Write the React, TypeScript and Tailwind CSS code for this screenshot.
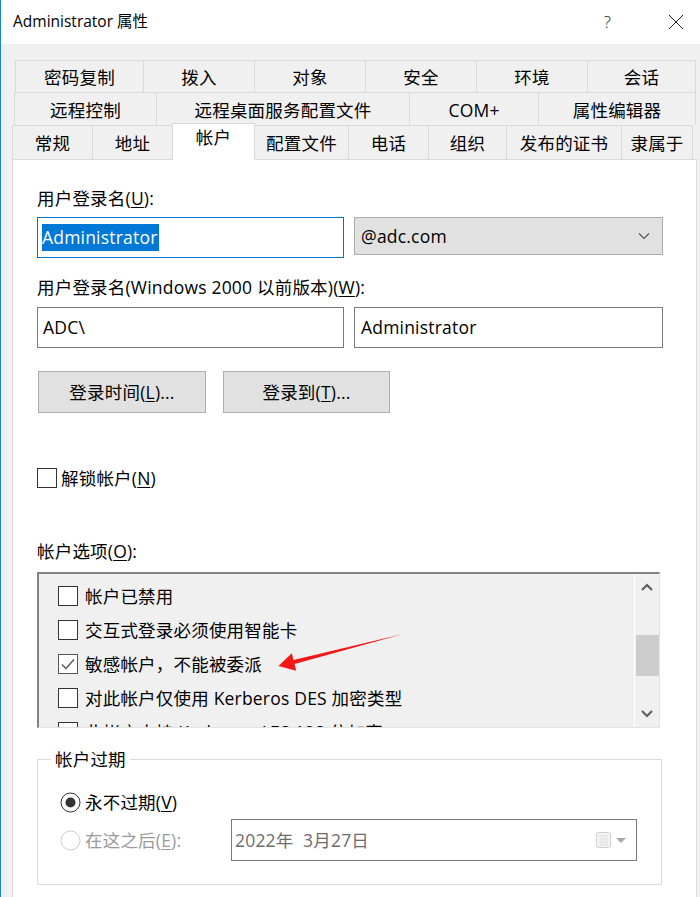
import React from 'react';

const FONT = "font-['Open_Sans','Noto_Sans_CJK_SC',sans-serif]";

type TabDef = { label: string; w: string; active?: boolean };

const row1: TabDef[] = [
  { label: '密码复制', w: 'w-[129px]' },
  { label: '拨入', w: 'w-[111px]' },
  { label: '对象', w: 'w-[111px]' },
  { label: '安全', w: 'w-[111px]' },
  { label: '环境', w: 'w-[111px]' },
  { label: '会话', w: 'w-[108px]' },
];

const row2: TabDef[] = [
  { label: '远程控制', w: 'w-[143px]' },
  { label: '远程桌面服务配置文件', w: 'w-[253px]' },
  { label: 'COM+', w: 'w-[129px]' },
  { label: '属性编辑器', w: 'w-[157px]' },
];

const row3: TabDef[] = [
  { label: '常规', w: 'w-[81px]' },
  { label: '地址', w: 'w-[79px]' },
  { label: '帐户', w: 'w-[83px]', active: true },
  { label: '配置文件', w: 'w-[94px]' },
  { label: '电话', w: 'w-[80px]' },
  { label: '组织', w: 'w-[78px]' },
  { label: '发布的证书', w: 'w-[115px]' },
  { label: '隶属于', w: 'w-[71px]' },
];

const TabRow = ({ tabs, className }: { tabs: TabDef[]; className: string }) => (
  <div className={`flex ${className}`}>
    {tabs.map((t, i) =>
      t.active ? (
        <div
          key={t.label}
          className={`${t.w} relative z-10 -mt-[2px] h-[37px] bg-white border-t border-l border-r border-[#d9d9d9] flex justify-center pt-[1px] leading-[24px]`}
        >
          {t.label}
        </div>
      ) : (
        <div
          key={t.label}
          className={`${t.w} border-t border-[#d9d9d9] ${i === 0 ? 'border-l' : ''} ${
            tabs[i + 1]?.active ? '' : 'border-r'
          } flex items-center justify-center pt-[2px]`}
        >
          {t.label}
        </div>
      )
    )}
  </div>
);

const CheckBox = ({ checked = false }: { checked?: boolean }) => (
  <svg width="20" height="20" viewBox="0 0 20 20" className="shrink-0">
    <rect x="0.5" y="0.5" width="19" height="19" fill="white" stroke={checked ? '#555' : '#333'} />
    {checked && <path d="M4 10.5 L8 14.5 L16 5.5" fill="none" stroke="#555" strokeWidth="1.4" />}
  </svg>
);

const Radio = ({ checked = false, disabled = false }: { checked?: boolean; disabled?: boolean }) => (
  <svg width="21" height="21" viewBox="0 0 21 21" className="shrink-0">
    <circle cx="10.5" cy="10.5" r="9.5" fill="white" stroke={disabled ? '#cccccc' : '#333'} />
    {checked && <circle cx="10.5" cy="10.5" r="5" fill="#333" />}
  </svg>
);

const options = [
  { label: '帐户已禁用' },
  { label: '交互式登录必须使用智能卡' },
  { label: '敏感帐户，不能被委派', checked: true },
  { label: '对此帐户仅使用 Kerberos DES 加密类型' },
  { label: '此帐户支持 Kerberos AES 128 位加密' },
];

export default function App() {
  return (
    <div className={`${FONT} relative w-[700px] h-[897px] overflow-hidden bg-[#f0f0f0] text-[17.5px] tracking-[0.2px] text-black border-l border-[#1883d7]`}>
      {/* title bar */}
      <div className="h-[44px] bg-white flex items-center pl-[12px] pr-[16px]">
        <span className="text-[15.5px] tracking-normal flex-1">Administrator 属性</span>
        <span className="text-[17px] font-light text-[#222] mr-[57px]">?</span>
        <svg width="16" height="16" viewBox="0 0 16 16">
          <path d="M1 1 L15 15 M15 1 L1 15" stroke="#222" strokeWidth="1" />
        </svg>
      </div>

      {/* tabs */}
      <div className="mt-[16px]">
        <TabRow tabs={row1} className="ml-[14px] h-[32px]" />
        <TabRow tabs={row2} className="ml-[13px] h-[33px]" />
        <TabRow tabs={row3} className="ml-[11px] h-[34px]" />
      </div>

      {/* panel */}
      <div className="ml-[11px] w-[685px] h-[740px] bg-white border border-[#d9d9d9] flex flex-col pl-[24px]">
        <div className="mt-[26px] leading-[24px]">
          用户登录名(<u className="underline-offset-2">U</u>):
        </div>
        <div className="mt-[7px] flex gap-[10px]">
          <div className="w-[307px] h-[41px] border border-[#0078d7] flex items-center pl-[4px]">
            <span className="bg-[#0078d7] text-white leading-[27px] pr-[1px]">Administrator</span>
          </div>
          <div className="w-[309px] h-[38px] bg-[#e1e1e1] border border-[#adadad] flex items-center pl-[6px] pr-[12px]">
            <span className="flex-1">@adc.com</span>
            <svg width="12" height="8" viewBox="0 0 12 8">
              <path d="M1 1.5 L6 6.5 L11 1.5" fill="none" stroke="#555" strokeWidth="1.2" />
            </svg>
          </div>
        </div>

        <div className="mt-[17px] leading-[24px]">
          用户登录名(Windows 2000 以前版本)(<u className="underline-offset-2">W</u>):
        </div>
        <div className="mt-[8px] flex gap-[10px]">
          <div className="w-[307px] h-[41px] border border-[#7a7a7a] flex items-center pl-[5px]">ADC\</div>
          <div className="w-[309px] h-[41px] border border-[#7a7a7a] flex items-center pl-[6px]">Administrator</div>
        </div>

        <div className="mt-[23px] ml-[1px] flex gap-[17px]">
          <div className="w-[168px] h-[42px] bg-[#e1e1e1] border border-[#adadad] flex items-center justify-center">
            登录时间(<u className="underline-offset-2">L</u>)...
          </div>
          <div className="w-[167px] h-[42px] bg-[#e1e1e1] border border-[#adadad] flex items-center justify-center">
            登录到(<u className="underline-offset-2">T</u>)...
          </div>
        </div>

        <div className="mt-[53px] h-[24px] flex items-center gap-[4px]">
          <CheckBox />
          <span>
            解锁帐户(<u className="underline-offset-2">N</u>)
          </span>
        </div>

        <div className="mt-[49px] leading-[24px]">
          帐户选项(<u className="underline-offset-2">O</u>):
        </div>

        {/* options list */}
        <div className="mt-[9px] w-[623px] h-[156px] bg-[#f0f0f0] border-t-2 border-l-2 border-[#828282] border-r border-b border-r-[#e3e3e3] border-b-[#e3e3e3] flex overflow-hidden">
          <div className="flex-1 pl-[19px] pt-[5px]">
            {options.map((o) => (
              <div key={o.label} className="h-[34px] flex items-center gap-[7px] whitespace-nowrap">
                <CheckBox checked={o.checked} />
                <span>{o.label}</span>
              </div>
            ))}
          </div>
          <div className="w-[25px] border-l border-white flex flex-col items-center pt-[8px] pb-[8px]">
            <svg width="14" height="10" viewBox="0 0 14 10">
              <path d="M2 8 L7 3 L12 8" fill="none" stroke="#606060" strokeWidth="2.2" />
            </svg>
            <div className="mt-[43px] w-[23px] h-[41px] bg-[#cdcdcd]" />
            <div className="flex-1" />
            <svg width="14" height="10" viewBox="0 0 14 10">
              <path d="M2 2 L7 7 L12 2" fill="none" stroke="#606060" strokeWidth="2.2" />
            </svg>
          </div>
        </div>

        {/* expiry group */}
        <fieldset className="mt-[19px] w-[625px] h-[138px] border border-[#dcdcdc] pl-[22px] pr-[0px]">
          <legend className="ml-[-9px] px-[4px] leading-[24px]">帐户过期</legend>
          <div className="mt-[19px] h-[24px] flex items-center gap-[4px]">
            <Radio checked />
            <span>
              永不过期(<u className="underline-offset-2">V</u>)
            </span>
          </div>
          <div className="mt-[5px] flex items-center">
            <div className="w-[171px] flex items-center gap-[4px] text-[#9a9a9a]">
              <Radio disabled />
              <span>
                在这之后(<u className="underline-offset-2">E</u>):
              </span>
            </div>
            <div className="w-[406px] h-[42px] border border-[#7a7a7a] flex items-center pl-[3px] pr-[9px] text-[#6d6d6d]">
              <span className="flex-1 whitespace-pre">2022年  3月27日</span>
              <svg width="16" height="17" viewBox="0 0 16 17">
                <rect x="0.5" y="0.5" width="14" height="15" rx="2" fill="#f4f4f4" stroke="#cfcfcf" />
                <path d="M3 4 H12 M3 7 H12 M3 10 H12 M3 13 H12 M5 3 V14 M8 3 V14 M11 3 V14" stroke="#e2e2e2" strokeWidth="1" />
              </svg>
              <svg width="12" height="8" viewBox="0 0 12 8" className="ml-[3px]">
                <path d="M1 2 L11 2 L6 7 Z" fill="#aaaaaa" />
              </svg>
            </div>
          </div>
        </fieldset>
      </div>

      {/* annotation arrow */}
      <svg className="absolute left-0 top-0 pointer-events-none" width="700" height="897" viewBox="0 0 700 897">
        <polygon
          points="277.5,666 290.8,653.3 292.5,660 402,634 293.5,664 295.2,670.7"
          fill="#f21818"
        />
      </svg>
    </div>
  );
}
